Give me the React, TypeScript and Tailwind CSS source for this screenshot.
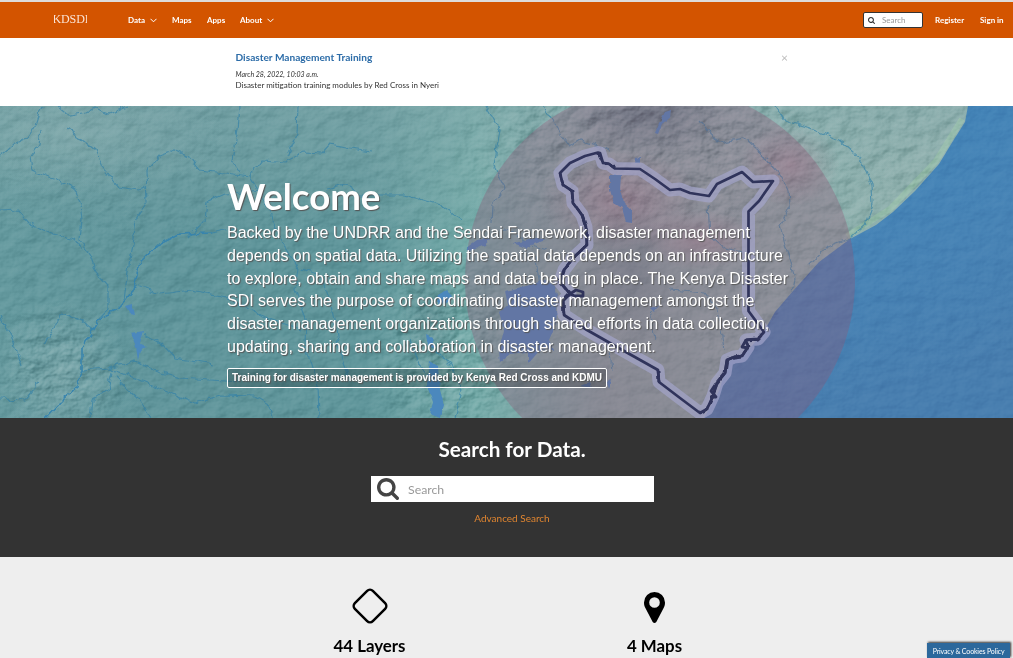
const rivers = [
  "M42 106 L36 125 L28 137 L14 144 L8 150 L0 156",
  "M40 130 L38 145 L30 157 L32 170 L50 178 L62 182 L75 190 L80 205 L82 220 L80 240 L90 255 L96 272 L108 285 L108 310 L98 320",
  "M58 106 L70 116 L85 113 L95 108 L110 114 L127 107",
  "M67 128 L95 150 L103 168 L118 187 L138 190 L146 188",
  "M0 211 L18 210 L30 224 L54 234 L75 240 L82 250",
  "M45 418 L62 400 L77 387 L82 370 L82 347 L98 320 L115 312 L133 291 L140 262 L158 245 L180 234 L212 233 L235 228",
  "M124 300 L128 270 L133 245 L136 220 L147 203 L146 171 L160 155 L174 150 L188 156 L200 170 L225 173 L250 176",
  "M240 106 L238 130 L232 160 L240 172 M298 106 L297 135 L288 155",
  "M250 176 L262 160 L285 162 L304 152 L322 153 L330 144 L350 148 L372 151",
  "M136 286 L160 294 L192 290 L225 297 L260 315 L300 330",
  "M188 238 L205 220 L207 202 L225 194 L260 190 M250 176 L265 200 L280 240 L298 268 L320 275 L330 300",
  "M82 370 L108 368 L135 361 L155 371 L180 378 L240 382",
  "M108 368 L140 380 L165 391 L195 403 L220 395 L255 396 L270 405 L272 418",
  "M112 372 L108 390 L92 400 L90 418 M115 376 L140 400 L151 418",
  "M45 345 L62 313 L82 321 L94 330 M0 315 L11 335 L21 367 M0 399 L25 400 L39 383",
  "M145 334 L162 344 L175 358 L213 365",
  "M298 268 L295 290 L306 318 L305 345 L318 385 L319 418 M330 300 L340 350 L350 380",
  "M325 190 L345 185 L360 195 L405 195 L440 205 L462 220",
  "M486 106 L500 130 L494 165 L505 188 L493 205 L492 223 M543 106 L555 125 L570 146 L580 140 L610 150",
  "M505 228 L530 245 L546 250 M535 255 L540 285",
  "M776 106 L785 120 L810 128 L840 140 L860 157 L872 185 L873 205 L866 224 L850 238 L827 247 L810 265",
  "M700 121 L718 143 L745 138 L758 150 L780 175 L789 190 L790 205 L780 226 L787 252 L795 278 L792 292",
  "M708 205 L710 235 L725 248 L742 252 M670 290 L705 293 L718 310 L724 350 M650 310 L655 340 M610 350 L612 372",
  "M430 345 L450 365 L462 390 L455 418 M410 340 L420 365 L433 382",
];

const border =
  "M598 152.500 L585 156 L570 163 L560 173 L563 185 L572 191 L573 203 L582 215 L586 227 L587 245 L573 258 L564 270 L560 282 L570 294 L563 301 L564 315 L587 330 L617 347 L658 370 L659 382 L680 398 L700 413 L707 409 L713 396 L717 383 L725 373 L727 360 L734 357 L742 356 L748 347 L746 340 L758 339 L764 332 L748.500 311 L748.500 211.500 L759 201 L773 181 L753 182 L742 172 L717 184 L709 196 L690 193 L680 189 L670 190 L655 179 L640 169 L615 168.500 L609 164 L603 163 L600 153 Z";

const coast =
  "M968 106 L965 122 L953 141 L939 164 L915 191 L893 212 L876 225 L850 239 L819 262 L793 291 L775 312 L763 333 L748 350 L728 362 L719 391 L704 418 L1013 418 L1013 106 Z";

function Terrain() {
  return (
    <svg className="absolute inset-0 h-full w-full" viewBox="0 106 1013 312" preserveAspectRatio="none" aria-hidden="true">
      <defs>
        <linearGradient id="land" x1="0" x2="1" y1="0" y2="0">
          <stop offset="0" stopColor="#64999e" />
          <stop offset="0.15" stopColor="#60959b" />
          <stop offset="0.36" stopColor="#60969b" />
          <stop offset="0.47" stopColor="#74aaa8" />
          <stop offset="0.6" stopColor="#84a5a4" />
          <stop offset="0.8" stopColor="#8aaeab" />
          <stop offset="1" stopColor="#93b0ad" />
        </linearGradient>
        <linearGradient id="sky" x1="0" x2="0" y1="0" y2="1">
          <stop offset="0" stopColor="#84aaac" stopOpacity="0.5" />
          <stop offset="0.4" stopColor="#8fb0b0" stopOpacity="0" />
        </linearGradient>
        <radialGradient id="hills">
          <stop offset="0" stopColor="#9ab8b8" stopOpacity="0.32" />
          <stop offset="1" stopColor="#9ab8b8" stopOpacity="0" />
        </radialGradient>
        <radialGradient id="dark">
          <stop offset="0" stopColor="#42656f" stopOpacity="0.5" />
          <stop offset="1" stopColor="#42656f" stopOpacity="0" />
        </radialGradient>
        <radialGradient id="rose">
          <stop offset="0" stopColor="#b3788c" stopOpacity="0.32" />
          <stop offset="1" stopColor="#b3788c" stopOpacity="0" />
        </radialGradient>
        <radialGradient id="fade">
          <stop offset="0" stopColor="white" />
          <stop offset="0.4" stopColor="white" />
          <stop offset="1" stopColor="white" stopOpacity="0" />
        </radialGradient>
        <mask id="highlands" maskUnits="userSpaceOnUse" x="0" y="106" width="1013" height="312">
          <ellipse cx="640" cy="150" rx="190" ry="100" fill="url(#fade)" />
          <ellipse cx="450" cy="350" rx="80" ry="110" fill="url(#fade)" />
          <ellipse cx="60" cy="370" rx="70" ry="70" fill="url(#fade)" />
        </mask>
        <linearGradient id="ocean" x1="0" x2="0.3" y1="0" y2="1">
          <stop offset="0" stopColor="#4285b9" />
          <stop offset="0.6" stopColor="#4783b5" />
          <stop offset="1" stopColor="#487eaf" />
        </linearGradient>
        <filter id="relief" x="0" y="0" width="100%" height="100%" colorInterpolationFilters="sRGB">
          <feTurbulence type="fractalNoise" baseFrequency="0.045 0.06" numOctaves="4" seed="8" />
          <feColorMatrix values="0 0 0 0 0  0 0 0 0 0  0 0 0 0 0  1 0 0 0 0" />
          <feDiffuseLighting surfaceScale="3.500" diffuseConstant="0.77" lightingColor="#ffffff">
            <feDistantLight azimuth="225" elevation="42" />
          </feDiffuseLighting>
        </filter>
        <filter id="rough" x="-5%" y="-5%" width="110%" height="110%" colorInterpolationFilters="sRGB">
          <feTurbulence type="fractalNoise" baseFrequency="0.12" numOctaves="2" seed="3" />
          <feDisplacementMap in="SourceGraphic" scale="7" xChannelSelector="R" yChannelSelector="G" />
        </filter>
        <filter id="edge" x="-5%" y="-5%" width="110%" height="110%" colorInterpolationFilters="sRGB">
          <feTurbulence type="fractalNoise" baseFrequency="0.16" numOctaves="2" seed="5" />
          <feDisplacementMap in="SourceGraphic" scale="3.500" xChannelSelector="R" yChannelSelector="G" />
        </filter>
        <clipPath id="landArea">
          <path d="M0 106 H968 L965 122 L939 164 L893 212 L850 239 L819 262 L763 333 L728 362 L704 418 H0 Z" />
        </clipPath>
      </defs>
      <rect x="0" y="106" width="1013" height="312" fill="url(#land)" />
      <rect x="0" y="106" width="1013" height="312" fill="url(#sky)" />
      <ellipse cx="60" cy="375" rx="70" ry="75" fill="url(#hills)" />
      <ellipse cx="75" cy="135" rx="150" ry="60" fill="url(#hills)" />
      <ellipse cx="650" cy="115" rx="80" ry="42" fill="url(#dark)" />
      <ellipse cx="630" cy="270" rx="45" ry="80" fill="url(#dark)" opacity="0.6" />
      <ellipse cx="430" cy="320" rx="30" ry="75" fill="url(#dark)" opacity="0.6" />
      <ellipse cx="620" cy="200" rx="80" ry="50" fill="url(#rose)" />
      <ellipse cx="790" cy="165" rx="50" ry="42" fill="url(#rose)" />
      <ellipse cx="700" cy="240" rx="60" ry="30" fill="url(#rose)" />
      <path d="M850 239 L893 212 L939 164 L965 122" fill="none" stroke="#9bc4aa" strokeWidth="6" opacity="0.55" transform="translate(-3 -3)" />
      <path d={coast} fill="url(#ocean)" />
      <g clipPath="url(#landArea)" className="opacity-35 mix-blend-soft-light">
        <rect x="0" y="106" width="1013" height="312" filter="url(#relief)" />
      </g>
      <g mask="url(#highlands)" className="opacity-60 mix-blend-soft-light">
        <rect x="0" y="106" width="1013" height="312" filter="url(#relief)" />
      </g>
      <g className="opacity-20 mix-blend-soft-light">
        <rect x="700" y="106" width="313" height="312" filter="url(#relief)" />
      </g>
      <g filter="url(#rough)" fill="none" stroke="#2f7fa8" strokeWidth="1.200" opacity="0.62">
        {rivers.map((d) => (
          <path key={d} d={d} />
        ))}
      </g>
      <path filter="url(#rough)" d="M45 418 L62 400 L77 387 L82 370 L82 347 L98 320 L115 312 L133 291 L140 262 L158 245 L180 234 L212 233" fill="none" stroke="#3684b0" strokeWidth="1.400" opacity="0.8" />
      <g fill="#4b88bd" filter="url(#edge)">
        <path d="M125 306 L132 304 L135 314 L130 313 Z M131 333 L144 331 L140 344 L147 346 L140 350 L138 361 L136 347 Z" />
        <path d="M505 291 L530 285 L545 280 L555 286 L558 300 L556 324 L549 340 L554 350 L540 350 L528 364 L528 352 L510 354 L500 362 L499 350 L504 330 L499 312 L508 305 Z" />
        <path d="M610 175 L621 175 L620 190 L624 203 L632 210 L632 223 L626 222 L622 208 L614 203 L610 190 Z" />
        <path d="M635 158 L641 157 L641 163 L634 163 Z M665 112 L671 110 L670 118 L662 124 L658 134 L655 133 L659 123 Z" />
        <path d="M466 248 L477 240 L491 238 L485 245 L468 252 Z M513 243 L525 241 L538 238 L546 240 L531 245 L526 248 Z" />
        <path d="M438 295 L446 290 L452 296 L448 303 L437 304 Z M426 335 L432 338 L435 348 L428 346 Z M429 361 L438 366 L440 390 L444 405 L440 418 L430 414 L433 402 L427 386 Z" />
        <path d="M580 386 L590 382 L592 388 Z M606 382 L611 380 L608 389 Z M650 308 L659 306 L654 312 Z" />
      </g>
      <circle cx="660" cy="280" r="195" fill="#8f5675" opacity="0.34" />
      <path d={border} fill="none" stroke="#a4a5cc" strokeWidth="13" strokeLinejoin="round" opacity="0.68" />
      <g fill="none" stroke="#30345b" strokeLinejoin="round">
        <path d={border} strokeWidth="2.700" />
        <path filter="url(#edge)" d="M598 153 L603 163 L609 164 L615 168.500 M560 173 L563 185 L572 191 L573 203 L582 215 L586 227 L587 245 L573 258 L564 270 L560 282 L570 294 L563 301 L564 315 M658 370 L659 382 M700 413 L707 409 L713 396 L717 383 L725 373 L727 360 L734 357 L742 356 L748 347 L746 340 L758 339 L764 332" strokeWidth="2.800" />
        <path d="M570 294 L576 290 L583 292 L583 296 L575 296 L570 294 M746 340 L742 347 L749 348 M715 385 L711 391 L716 397 L710 397" strokeWidth="2.800" />
      </g>
    </svg>
  );
}

function Chevron() {
  return (
    <svg className="ml-[5px] h-[5px] w-[7px]" viewBox="0 0 7 5" fill="none" stroke="white" strokeWidth="1">
      <path d="M0.500 0.800 L3.500 3.800 L6.500 0.800" />
    </svg>
  );
}

function SearchIcon({ className }: { className: string }) {
  return (
    <svg className={className} viewBox="0 0 1664 1664" fill="currentColor" aria-hidden="true">
      <path d="M1152 704q0-185-131.500-316.500T704 256 387.500 387.500 256 704t131.500 316.500T704 1152t316.500-131.500T1152 704zm512 832q0 52-38 90t-90 38q-54 0-90-38l-343-342q-179 124-399 124-143 0-273.500-55.500t-225-150-150-225T0 704t55.500-273.500 150-225 225-150T704 0t273.500 55.500 225 150 150 225T1408 704q0 220-124 399l343 343q37 37 37 90z" />
    </svg>
  );
}

export default function App() {
  return (
    <div className="flex h-[658px] w-[1013px] flex-col overflow-hidden bg-[#eeeeee] font-['Lato',sans-serif] text-[#333]">
      <header className="flex h-[38px] shrink-0 items-center border-t-2 border-[#dedcda] bg-[#d35400] text-[8px] font-bold text-white">
        <div className="ml-[54px] flex h-[14px] w-[33px] justify-center overflow-hidden whitespace-nowrap font-['Liberation_Serif',serif] text-[12px] font-normal leading-[13px] tracking-[-0.100px] text-[#fbe4d6]">
          KDSDI
        </div>
        <nav className="ml-[41px] flex items-center">
          <a className="flex w-[44px] items-center">Data<Chevron /></a>
          <a className="w-[35px]">Maps</a>
          <a className="w-[33px]">Apps</a>
          <a className="flex items-center">About<Chevron /></a>
        </nav>
        <div className="ml-auto flex h-4 w-[60px] items-center rounded-[2px] border border-[#333] bg-white pl-1 font-normal text-[#999]">
          <SearchIcon className="mr-[7px] size-[7px] text-[#333]" />
          Search
        </div>
        <a className="ml-3 w-[45px]">Register</a>
        <a className="w-[33px]">Sign in</a>
      </header>

      <section className="flex h-[68px] shrink-0 justify-between bg-white pl-[235.500px] pr-[225px] pt-[13px]">
        <div>
          <h2 className="text-[10.150px] font-bold leading-[13px] text-[#2c6ca8]">Disaster Management Training</h2>
          <p className="mt-[6px] text-[7px] italic leading-[9px]">March 28, 2022, 10:03 a.m.</p>
          <p className="mt-px text-[8px] leading-[11px]">Disaster mitigation training modules by Red Cross in Nyeri</p>
        </div>
        <span className="text-[12px] leading-[13px] text-[#bbb]">×</span>
      </section>

      <main className="relative h-[312px] shrink-0 overflow-hidden bg-[#64989e]">
        <Terrain />
        <div className="relative flex flex-col items-start pl-[227px] pt-[67px] text-white [text-shadow:1px_1px_1px_#555]">
          <h1 className="text-[36.600px] font-bold leading-[46px]">Welcome</h1>
          <p className="mt-[3px] w-[575px] font-['Liberation_Sans',sans-serif] text-[16px] leading-[22.800px]">
            Backed by the UNDRR and the Sendai Framework, disaster management
            <br />
            depends on spatial data. Utilizing the spatial data depends on an infrastructure
            <br />
            to explore, obtain and share maps and data being in place. The Kenya Disaster
            <br />
            SDI serves the purpose of coordinating disaster management amongst the
            <br />
            disaster management organizations through shared efforts in data collection,
            <br />
            updating, sharing and collaboration in disaster management.
          </p>
          <a className="mt-[9px] flex h-[20px] w-[380px] items-center justify-center whitespace-nowrap rounded-[2px] border border-white bg-black/20 font-['Liberation_Sans',sans-serif] text-[10px] font-bold">
            Training for disaster management is provided by Kenya Red Cross and KDMU
          </a>
        </div>
      </main>

      <section className="flex h-[139px] shrink-0 flex-col items-center bg-[#333333] pl-[11px] pt-[19px]">
        <h2 className="text-[20.700px] font-bold leading-[25px] text-white">Search for Data.</h2>
        <div className="mt-[14px] flex h-[26px] w-[283px] items-center bg-white pl-[6px] text-[12px] text-[#999]">
          <SearchIcon className="mr-[9.500px] size-[22px] text-[#444]" />
          <span className="pt-[2px] text-[12.300px]">Search</span>
        </div>
        <a className="mt-[10px] text-[10px] leading-[13px] text-[#e08530]">Advanced Search</a>
      </section>

      <section className="relative flex flex-1 pl-[227px] text-[16.850px] font-bold leading-5 text-black">
        <div className="flex w-[285px] flex-col items-center">
          <svg className="mt-[30px] size-[38px]" viewBox="0 0 38 38" fill="none" stroke="black" strokeWidth="2.500">
            <rect x="6.300" y="6.300" width="25.400" height="25.400" rx="4" transform="rotate(45 19 19)" />
          </svg>
          <span className="mt-[11px]">44 Layers</span>
        </div>
        <div className="flex w-[285px] flex-col items-center">
          <svg className="mt-[34.500px] h-[32px] w-[21px]" viewBox="0 0 21 32" fill="black">
            <path fillRule="evenodd" d="M10.500 0 A10.500 10.500 0 0 0 0 10.500 C0 13 0.600 14.500 1.500 16.300 L8.700 30 Q10.500 32.200 12.300 30 L19.500 16.300 C20.400 14.500 21 13 21 10.500 A10.500 10.500 0 0 0 10.500 0 Z M10.500 5.200 A5.300 5.300 0 1 1 10.500 15.800 A5.300 5.300 0 1 1 10.500 5.200 Z" />
          </svg>
          <span className="mt-[12.500px]">4 Maps</span>
        </div>
        <div className="absolute bottom-0 right-[3px] flex h-[15px] w-[83px] items-center justify-center whitespace-nowrap bg-[#2c689c] text-[7px] font-normal tracking-[-0.150px] text-white shadow-[1px_-1px_2px_#333]">
          Privacy &amp; Cookies Policy
        </div>
      </section>
    </div>
  );
}
